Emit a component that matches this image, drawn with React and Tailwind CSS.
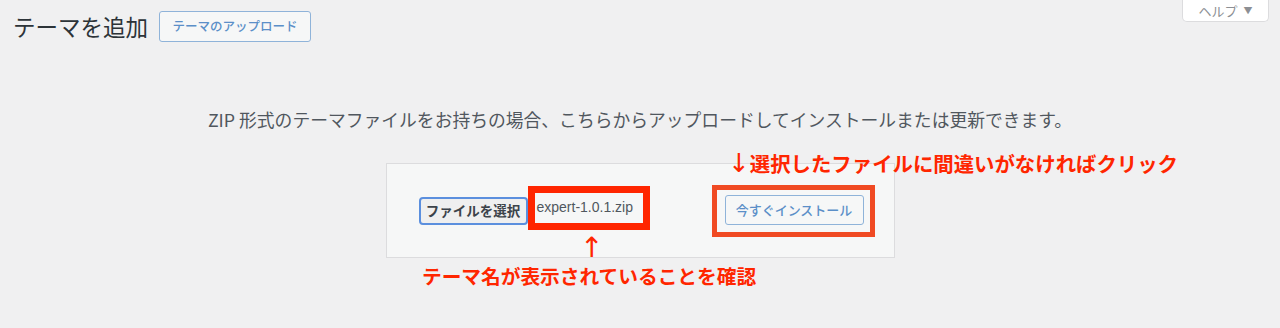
import React from "react";

const jp = { fontFamily: '"Noto Sans CJK JP", "Noto Sans", sans-serif' };

export default function App() {
  return (
    <div
      className="relative w-[1280px] h-[328px] overflow-hidden bg-[#f0f0f1]"
      style={jp}
    >
      {/* top row */}
      <div className="flex justify-between items-start">
        <div className="flex items-center gap-[11px] pl-[13px] pt-[11px]">
          <h1 className="text-[22.5px] leading-[31px] text-[#2c3338] font-normal">
            テーマを追加
          </h1>
          <button className="h-[31px] w-[152px] rounded-[3px] border border-[#8fb3d9] bg-[#f6f7f7] text-[12.5px] font-medium text-[#5b8fc8] leading-none">
            テーマのアップロード
          </button>
        </div>
        <button className="mr-[11px] mt-[-1px] h-[23px] w-[87px] rounded-b-[5px] border border-[#dcdcde] border-t-0 bg-white text-[13px] text-[#8c8f94] flex items-center justify-center gap-[6px] leading-none">
          <span>ヘルプ</span>
          <span className="text-[9px]">▼</span>
        </button>
      </div>

      {/* description */}
      <p className="mt-[65px] text-center text-[17.8px] leading-[24px] text-[#50575e]">
        ZIP 形式のテーマファイルをお持ちの場合、こちらからアップロードしてインストールまたは更新できます。
      </p>

      {/* upload box */}
      <div className="mx-auto mt-[32px] flex h-[95px] w-[509px] items-center border border-[#dcdcde] bg-[#f6f7f7] pl-[32px]">
        <button className="h-[28px] w-[109px] rounded-[4px] border-2 border-[#5b8fde] bg-[#efefef] text-[13.5px] font-semibold text-[#3c434a] leading-none">
          ファイルを選択
        </button>
        <div className="flex h-[44px] w-[122px] items-center border-[7px] border-[#ff2600] bg-[#f6f7f7] pl-[2px] mt-[-6px]">
          <span
            className="text-[14px] text-[#50575e]"
            style={{ fontFamily: '"Liberation Sans", Arial, sans-serif' }}
          >
            expert-1.0.1.zip
          </span>
        </div>
        <div className="ml-[62px] flex h-[52px] w-[163px] border-[5px] border-[#f04a23] pl-[8px] pt-[5px]">
          <button className="h-[30px] w-[139px] rounded-[3px] border border-[#8fb3d9] bg-[#f6f7f7] text-[13px] font-medium text-[#5b8fc8] leading-none">
            今すぐインストール
          </button>
        </div>
      </div>

      {/* annotations */}
      <div className="absolute left-[728px] top-[150px] flex items-center text-[20.4px] font-bold leading-[26px] text-[#ff2600]">
        <span
          className="text-[26px] leading-[26px] font-normal"
          style={{ fontFamily: '"DejaVu Sans", sans-serif' }}
        >
          ↓
        </span>
        <span>選択したファイルに間違いがなければクリック</span>
      </div>
      <div
        className="absolute left-[580px] top-[233px] text-[28px] leading-[30px] text-[#ff2600]"
        style={{ fontFamily: '"DejaVu Sans", sans-serif' }}
      >
        ↑
      </div>
      <div className="absolute left-[422px] top-[262px] text-[19.7px] font-bold leading-[28px] text-[#ff2600]">
        テーマ名が表示されていることを確認
      </div>
    </div>
  );
}
